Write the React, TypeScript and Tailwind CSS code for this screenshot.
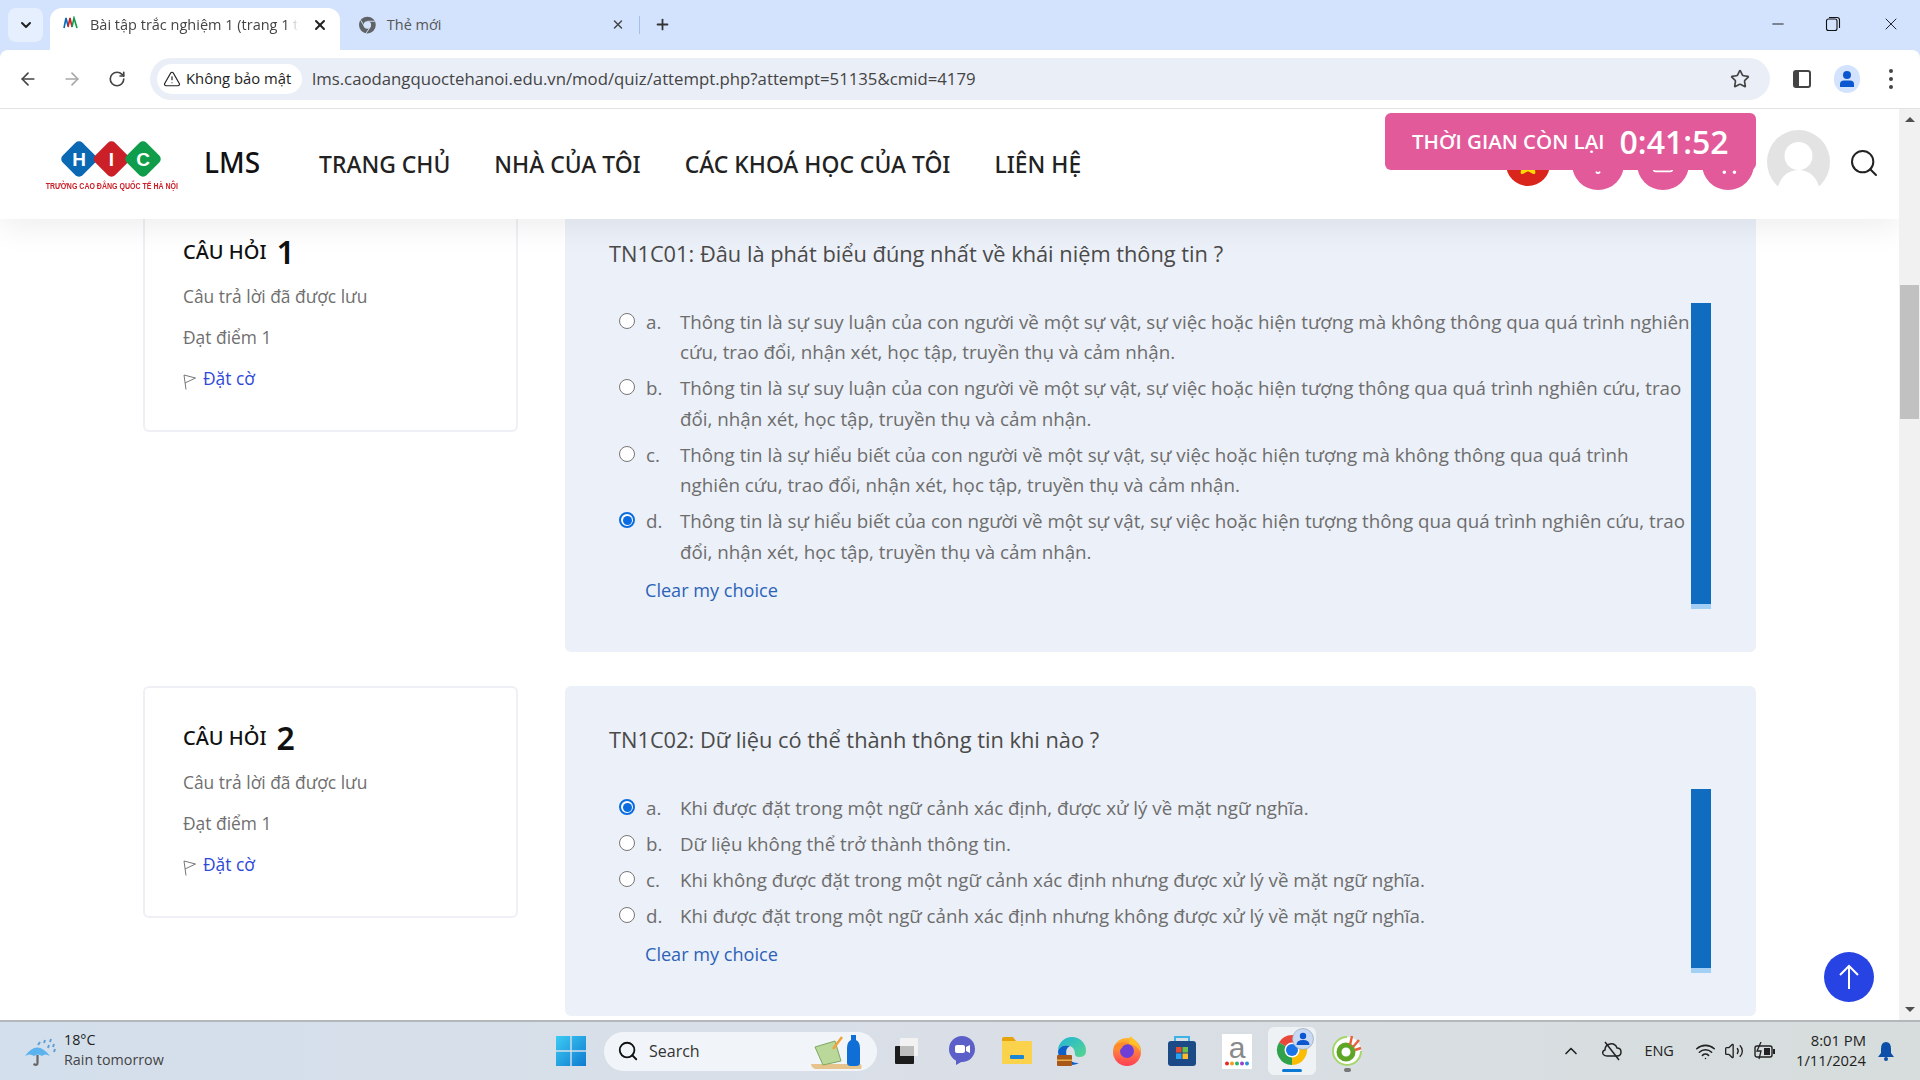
import { ArrowLeft, ArrowRight, Bell, ChevronDown, ChevronUp, Mail, Minus, Plus, RotateCw, Search, ShoppingCart, Star, TriangleAlert, Volume2, Wifi, X } from 'lucide-react';

const questions = [
  {
    number: 1,
    title: 'TN1C01: Đâu là phát biểu đúng nhất về khái niệm thông tin ?',
    picked: 'd',
    options: [
      ['a', 'Thông tin là sự suy luận của con người về một sự vật, sự việc hoặc hiện tượng mà không thông qua quá trình nghiên cứu, trao đổi, nhận xét, học tập, truyền thụ và cảm nhận.'],
      ['b', 'Thông tin là sự suy luận của con người về một sự vật, sự việc hoặc hiện tượng thông qua quá trình nghiên cứu, trao đổi, nhận xét, học tập, truyền thụ và cảm nhận.'],
      ['c', 'Thông tin là sự hiểu biết của con người về một sự vật, sự việc hoặc hiện tượng mà không thông qua quá trình nghiên cứu, trao đổi, nhận xét, học tập, truyền thụ và cảm nhận.'],
      ['d', 'Thông tin là sự hiểu biết của con người về một sự vật, sự việc hoặc hiện tượng thông qua quá trình nghiên cứu, trao đổi, nhận xét, học tập, truyền thụ và cảm nhận.'],
    ],
  },
  {
    number: 2,
    title: 'TN1C02: Dữ liệu có thể thành thông tin khi nào ?',
    picked: 'a',
    options: [
      ['a', 'Khi được đặt trong một ngữ cảnh xác định, được xử lý về mặt ngữ nghĩa.'],
      ['b', 'Dữ liệu không thể trở thành thông tin.'],
      ['c', 'Khi không được đặt trong một ngữ cảnh xác định nhưng được xử lý về mặt ngữ nghĩa.'],
      ['d', 'Khi được đặt trong một ngữ cảnh xác định nhưng không được xử lý về mặt ngữ nghĩa.'],
    ],
  },
];

function HicLogo() {
  return (
    <div className="mt-[3px] flex w-[132px] flex-col items-center">
      <svg width="102" height="38" viewBox="0 0 102 38">
        <rect x="4" y="5" width="28" height="28" rx="5" transform="rotate(45 18 19)" fill="#0b68b3" />
        <rect x="36.5" y="5" width="28" height="28" rx="5" transform="rotate(45 50.5 19)" fill="#cb2027" />
        <rect x="68" y="5" width="28" height="28" rx="5" transform="rotate(45 82 19)" fill="#0f9d4b" />
        <text x="18" y="26" textAnchor="middle" fontSize="19" fontWeight="700" fill="#fff" fontFamily="Liberation Sans">H</text>
        <text x="50.5" y="26" textAnchor="middle" fontSize="19" fontWeight="700" fill="#fff" fontFamily="Liberation Sans">I</text>
        <text x="82" y="26" textAnchor="middle" fontSize="19" fontWeight="700" fill="#fff" fontFamily="Liberation Sans">C</text>
      </svg>
      <div className="mt-[3px] scale-x-[0.78] whitespace-nowrap font-['Liberation_Sans'] text-[9px] leading-[11px] font-bold text-[#cb2027]">TRƯỜNG CAO ĐẲNG QUỐC TẾ HÀ NỘI</div>
    </div>
  );
}

function Avatar() {
  return (
    <svg width="63" height="64" viewBox="0 0 63 64">
      <ellipse cx="31.5" cy="32" rx="31.5" ry="32" fill="#e3e3e3" />
      <circle cx="31.5" cy="26" r="14" fill="#fff" />
      <path d="M10 62 C12 46 22 40 31.5 40 C41 40 51 46 53 62 C46 66 17 66 10 62 Z" fill="#fff" />
    </svg>
  );
}

function QuestionCard({ q }: { q: (typeof questions)[number] }) {
  return (
    <div className="flex gap-[47px]">
      <div className="h-[232px] w-[375px] shrink-0 rounded-md border-2 border-[#eef0f6] bg-white pt-[30px] pl-[38px]">
        <div className="flex h-[40px] items-center gap-[10px] font-['Noto_Sans'] font-semibold text-[#111]">
          <span className="text-[20px] font-medium">CÂU HỎI</span>
          <span className="text-[32px]">{q.number}</span>
        </div>
        <div className="mt-[4px] font-['Open_Sans'] text-[17.4px] leading-[41px] text-[#6f6f6f]">
          <div>Câu trả lời đã được lưu</div>
          <div>Đạt điểm 1</div>
          <div className="flex items-center gap-[7px]">
            <svg width="13" height="16" viewBox="0 0 13 16" className="mt-[6px]">
              <path d="M3 15.5 L1 1 L12.5 4 L2 9" fill="none" stroke="#777" strokeWidth="1" />
            </svg>
            <span className="text-[#2f49d8]">Đặt cờ</span>
          </div>
        </div>
      </div>
      <div className="w-[1191px] shrink-0 rounded-md bg-[#ecf0f8] pt-[36px] pr-[45px] pb-[43px] pl-[44px] font-['Open_Sans']">
        <h2 className="text-[21.8px] leading-[36px] font-normal text-[#4a4a4a]">{q.title}</h2>
        <div className="mt-[31px] ml-[1px] flex">
          <div className="w-[1081px] pt-[4px]">
            <div className="flex flex-col gap-[5.6px]">
              {q.options.map(([key, text]) => (
                <div key={key} className="flex text-[18.75px] leading-[30.4px] text-[#6d6d6d]">
                  <div className="ml-[9px] flex h-[30.4px] w-[27px] shrink-0 items-start pt-[6px]">
                    {q.picked === key ? (
                      <span className="flex h-[16px] w-[16px] items-center justify-center rounded-full border-2 border-[#0a6ce0] bg-white">
                        <span className="h-[9px] w-[9px] rounded-full bg-[#0a6ce0]" />
                      </span>
                    ) : (
                      <span className="h-[16px] w-[16px] rounded-full border border-[#767676] bg-white" />
                    )}
                  </div>
                  <span className="w-[34px] shrink-0">{key}.</span>
                  <span>{text}</span>
                </div>
              ))}
            </div>
            <div className="mt-[8px] mb-[4px] pl-[35px] text-[18.1px] leading-[30px] text-[#2b62b8]">Clear my choice</div>
          </div>
          <div className="w-[20px] shrink-0 border-b-[5px] border-b-[#a3cff5] bg-[#0f6cbf]" />
        </div>
      </div>
    </div>
  );
}

function BrowserChrome() {
  return (
    <>
      <div className="flex h-[50px] shrink-0 items-end bg-[#d3e3fd] font-['Open_Sans'] text-[14.5px] text-[#444]">
        <div className="mb-[8px] ml-[8px] flex h-[34px] w-[35px] items-center justify-center rounded-lg bg-[#e6effd]">
          <ChevronDown size={16} strokeWidth={3} color="#222" />
        </div>
        <div className="ml-[7px] flex h-[42px] w-[290px] items-center rounded-t-xl bg-white pb-[9px] pl-[13px]">
          <svg width="15" height="14" viewBox="0 0 15 14" className="mb-[4px]">
            <path d="M1 12 L3 2 L5 10" fill="none" stroke="#0b68b3" strokeWidth="1.6" />
            <path d="M5 11 L7 2 L9 11" fill="none" stroke="#cb2027" strokeWidth="1.6" />
            <path d="M9 11 L11 2 L14 12" fill="none" stroke="#0f9d4b" strokeWidth="1.6" />
          </svg>
          <span className="ml-[12px] w-[208px] overflow-hidden whitespace-nowrap [mask-image:linear-gradient(to_right,black_94%,transparent)]">Bài tập trắc nghiệm 1 (trang 1 t</span>
          <X size={16} strokeWidth={3} color="#222" className="ml-[14px]" />
        </div>
        <div className="flex h-[42px] w-[300px] items-center pb-[9px] pl-[19px]">
          <svg width="18" height="18" viewBox="0 0 18 18">
            <circle cx="9" cy="9" r="9" fill="#5f6368" />
            <circle cx="9" cy="9" r="4" fill="#d3e3fd" />
            <path d="M9 5 H17 M6 11 L2 4 M11.5 12 L7.5 18" stroke="#d3e3fd" strokeWidth="1" />
          </svg>
          <span className="ml-[11px] w-[226px] text-[#555]">Thẻ mới</span>
          <X size={15} strokeWidth={2.5} color="#444" className="ml-[14px]" />
          <div className="ml-[14px] h-[18px] w-[1px] bg-[#a5c0ea]" />
        </div>
        <div className="mb-[17px] ml-[14px]">
          <Plus size={17} strokeWidth={2.5} color="#333" />
        </div>
        <div className="mb-[16px] ml-auto flex items-center">
          <Minus size={18} strokeWidth={1.2} color="#111" />
          <svg width="16" height="16" viewBox="0 0 16 16" className="ml-[38px]">
            <rect x="1.5" y="3" width="10.5" height="11.5" rx="2" fill="none" stroke="#111" strokeWidth="1.1" />
            <path d="M4 1.5 H12 Q14.5 1.5 14.5 4 V12" fill="none" stroke="#111" strokeWidth="1.1" />
          </svg>
          <X size={20} strokeWidth={1.1} color="#111" className="mr-[19px] ml-[40px]" />
        </div>
      </div>
      <div className="flex h-[59px] shrink-0 items-center rounded-t-lg border-b border-b-[#e3e3e3] bg-white pb-[1px]">
        <ArrowLeft size={20} color="#444" strokeWidth={2} className="ml-[18px]" />
        <ArrowRight size={20} color="#a8a8a8" strokeWidth={2} className="ml-[24px]" />
        <RotateCw size={18} color="#444" strokeWidth={2.2} className="ml-[26px]" />
        <div className="ml-[24px] flex h-[42px] w-[1620px] items-center rounded-full bg-[#eaeef7] pr-[20px] pl-[7px]">
          <div className="flex h-[30px] w-[145px] items-center gap-[5px] rounded-full bg-white pl-[6px] font-['Open_Sans'] text-[14.8px] font-medium text-[#222]">
            <TriangleAlert size={18} strokeWidth={1.6} color="#222" />
            Không bảo mật
          </div>
          <span className="mt-[1px] ml-[10px] font-['Open_Sans'] text-[16.75px] text-[#444]">lms.caodangquoctehanoi.edu.vn/mod/quiz/attempt.php?attempt=51135&amp;cmid=4179</span>
          <Star size={20} color="#444" strokeWidth={2} className="ml-auto" />
        </div>
        <svg width="18" height="18" viewBox="0 0 18 18" className="ml-[23px]">
          <rect x="1" y="1" width="16" height="16" rx="2" fill="none" stroke="#444" strokeWidth="2" />
          <rect x="1" y="1" width="5" height="16" fill="#444" />
        </svg>
        <div className="ml-[23px] flex h-[28px] w-[26px] items-center justify-center rounded-full bg-[#d3e3fd]">
          <svg width="16" height="17" viewBox="0 0 16 17">
            <circle cx="8" cy="5" r="4" fill="#0b57d0" />
            <path d="M1 17 V14 Q1 10.5 5 10.5 H11 Q15 10.5 15 14 V17 Z" fill="#0b57d0" />
          </svg>
        </div>
        <div className="ml-[29px] flex flex-col gap-[4px]">
          <span className="h-[4px] w-[4px] rounded-full bg-[#444]" />
          <span className="h-[4px] w-[4px] rounded-full bg-[#444]" />
          <span className="h-[4px] w-[4px] rounded-full bg-[#444]" />
        </div>
      </div>
    </>
  );
}

function PageHeader() {
  return (
    <header className="relative z-10 flex h-[110px] items-center bg-white pl-[46px] shadow-[0_8px_30px_rgba(0,0,0,0.07)]">
      <HicLogo />
      <span className="mb-[4px] ml-[26px] font-['Noto_Sans'] text-[28px] font-medium text-[#111]">LMS</span>
      <nav className="mt-[2px] ml-[59px] flex gap-[44px] font-['Noto_Sans'] text-[22.9px] font-medium text-[#222]">
        <span>TRANG CHỦ</span>
        <span>NHÀ CỦA TÔI</span>
        <span>CÁC KHOÁ HỌC CỦA TÔI</span>
        <span>LIÊN HỆ</span>
      </nav>
      <div className="ml-auto flex items-center pr-[19px]">
        <div className="flex items-center gap-[13px]">
          <span className="mr-[9px] flex h-[44px] w-[44px] items-center justify-center rounded-full bg-[#da251d]">
            <Star size={24} fill="#ffdd00" color="#ffdd00" />
          </span>
          <span className="flex h-[52px] w-[52px] items-center justify-center rounded-full bg-[#e25a9a]">
            <Bell size={22} color="#fff" />
          </span>
          <span className="flex h-[52px] w-[52px] items-center justify-center rounded-full bg-[#e25a9a]">
            <Mail size={22} color="#fff" />
          </span>
          <span className="flex h-[52px] w-[52px] items-center justify-center rounded-full bg-[#e25a9a]">
            <ShoppingCart size={22} color="#fff" />
          </span>
        </div>
        <div className="mb-[4px] ml-[13px]">
          <Avatar />
        </div>
        <Search size={32} strokeWidth={1.5} color="#222" className="mb-[2px] ml-[18px]" />
      </div>
      <div className="absolute top-[4px] left-[1385px] flex h-[57px] w-[371px] items-center rounded-md bg-[#e25a9a] pl-[27px] font-['Open_Sans'] font-semibold text-white">
        <span className="text-[20.5px]">THỜI GIAN CÒN LẠI</span>
        <span className="ml-[15px] text-[32px]">0:41:52</span>
      </div>
    </header>
  );
}

function Scrollbar() {
  return (
    <div className="flex w-[21px] shrink-0 flex-col items-center bg-[#f1f1f1]">
      <div className="mt-[8px] h-0 w-0 border-x-[5px] border-b-[5px] border-x-transparent border-b-[#505050]" />
      <div className="mt-[163px] h-[134px] w-[19px] bg-[#c1c1c1]" />
      <div className="mt-auto mb-[8px] h-0 w-0 border-x-[5px] border-t-[5px] border-x-transparent border-t-[#505050]" />
    </div>
  );
}

function TaskbarApps() {
  return (
    <div className="flex items-center">
      <svg width="30" height="30" viewBox="0 0 30 30" className="mr-[18px]">
        <defs>
          <linearGradient id="win" x1="0" y1="0" x2="1" y2="1">
            <stop offset="0" stopColor="#3ccbf4" />
            <stop offset="1" stopColor="#0f7bd0" />
          </linearGradient>
          <linearGradient id="edge" x1="0" y1="0" x2="1" y2="1">
            <stop offset="0" stopColor="#1fb5d8" />
            <stop offset="1" stopColor="#58d68d" />
          </linearGradient>
          <linearGradient id="fox" x1="0" y1="0" x2="0" y2="1">
            <stop offset="0" stopColor="#ffb52e" />
            <stop offset="1" stopColor="#ff3d56" />
          </linearGradient>
        </defs>
        <path d="M0 0 H14.3 V14.3 H0 Z M15.7 0 H30 V14.3 H15.7 Z M0 15.7 H14.3 V30 H0 Z M15.7 15.7 H30 V30 H15.7 Z" fill="url(#win)" />
      </svg>
      <div className="flex h-[39px] w-[273px] items-center rounded-full bg-[#f1f5f9] pl-[13px] font-['Open_Sans'] text-[16px] text-[#333]">
        <Search size={22} strokeWidth={2} color="#111" />
        <span className="ml-[10px]">Search</span>
        <svg width="62" height="36" viewBox="0 0 62 36" className="mr-[6px] ml-auto">
          <path d="M2 31 H50 Q54 31 52 36 H6 Q2 34 2 31 Z" fill="#e6c48c" />
          <path d="M6 14 L26 8 L32 28 L14 32 Z" fill="#b9d89a" stroke="#7fa860" />
          <path d="M24 16 L33 4" stroke="#f2a33a" strokeWidth="2.5" />
          <path d="M38 15 Q38 9 42 7 V2 H47 V7 Q51 9 51 15 V30 Q51 33 47 33 H42 Q38 33 38 30 Z" fill="#0f6fd6" />
        </svg>
      </div>
      <div className="ml-[15px] flex items-center gap-[25px]">
        <svg width="30" height="30" viewBox="0 0 30 30">
          <rect x="8" y="2" width="18" height="18" rx="1" fill="#f2f2f2" />
          <rect x="3" y="10" width="19" height="18" rx="1" fill="#1c1c1c" />
          <rect x="8" y="10" width="14" height="10" fill="#bdbdbd" />
        </svg>
        <svg width="30" height="30" viewBox="0 0 30 30">
          <circle cx="15" cy="13" r="13" fill="#5b5fc7" />
          <path d="M9 22 L9 29 L16 25 Z" fill="#5b5fc7" />
          <rect x="8" y="9" width="10" height="8" rx="2" fill="#fff" />
          <path d="M19 11 L23 9 V17 L19 15 Z" fill="#fff" />
        </svg>
        <svg width="30" height="30" viewBox="0 0 30 30">
          <path d="M0 3 Q0 1 2 1 H11 L14 5 H0 Z" fill="#e5a50a" />
          <rect x="0" y="5" width="30" height="23" rx="1" fill="#fbd24c" />
          <rect x="8" y="19" width="14" height="4" rx="1" fill="#1b86d6" />
        </svg>
        <svg width="30" height="30" viewBox="0 0 30 30">
          <path d="M1 15 A14 14 0 0 1 29 15 Q29 21 22 21 Q18 21 18 18 Q18 12 13 10 Q4 8 1 15 Z" fill="url(#edge)" />
          <path d="M1 15 Q4 8 13 10 Q7 13 10 21 Q13 27 22 27 Q18 29 15 29 A14 14 0 0 1 1 15 Z" fill="#0c60c7" />
          <rect x="0" y="19" width="15" height="11" rx="1" fill="#a8591a" />
          <rect x="0" y="23.5" width="15" height="1.5" fill="#e8b04a" />
        </svg>
        <svg width="30" height="30" viewBox="0 0 30 30">
          <circle cx="15" cy="16" r="14" fill="url(#fox)" />
          <path d="M18 0 Q28 7 29 17 Q25 8 17 8 Z" fill="#ffc226" />
          <circle cx="15" cy="15" r="7" fill="#6d3fd6" />
          <path d="M2 10 Q8 4 18 8 Q11 8 10 12 L5 16 Z" fill="#ff8a2b" />
        </svg>
        <svg width="30" height="32" viewBox="0 0 30 32">
          <path d="M8 8 V2 H22 V8" fill="none" stroke="#3cb2e6" strokeWidth="2" />
          <rect x="1" y="6" width="28" height="25" rx="3" fill="#1b4a86" />
          <rect x="9" y="12" width="5.5" height="5.5" fill="#e94a2f" />
          <rect x="15.5" y="12" width="5.5" height="5.5" fill="#6cc04a" />
          <rect x="9" y="18.5" width="5.5" height="5.5" fill="#2aa3ef" />
          <rect x="15.5" y="18.5" width="5.5" height="5.5" fill="#fbb92d" />
        </svg>
        <div className="flex h-[35px] w-[30px] flex-col items-center bg-white">
          <span className="font-['Liberation_Sans'] text-[30px] leading-[27px] text-[#8a8a8a]">a</span>
          <svg width="26" height="5" viewBox="0 0 26 5">
            <circle cx="3" cy="2.5" r="2" fill="#e5262a" />
            <circle cx="8" cy="2.5" r="2" fill="#f0a020" />
            <circle cx="13" cy="2.5" r="2" fill="#2bb36c" />
            <circle cx="18" cy="2.5" r="2" fill="#9a3fd6" />
            <circle cx="23" cy="2.5" r="2" fill="#2a8fd6" />
          </svg>
        </div>
        <div className="-mx-[9px] flex h-[48px] w-[48px] flex-col items-center justify-center rounded-md bg-[#eef2f4]">
          <svg width="42" height="38" viewBox="0 0 42 38" className="-mt-[2px] ml-[8px]">
            <path d="M17 22 L4 14.5 A15 15 0 0 1 30 14.5 Z" fill="#e9473a" />
            <path d="M17 37 A15 15 0 0 1 4 14.5 L17 22 Z" fill="#31a24c" />
            <path d="M30 14.5 A15 15 0 0 1 17 37 L17 22 Z" fill="#fbbc04" />
            <circle cx="17" cy="22" r="7.5" fill="#fff" />
            <circle cx="17" cy="22" r="6" fill="#1a73e8" />
            <circle cx="28" cy="11" r="10.5" fill="#c9d9f2" stroke="#9aa6b5" strokeWidth="0.7" />
            <circle cx="28" cy="8" r="3.2" fill="#0b57d0" />
            <path d="M21.5 17 Q21.5 12 28 12 Q34.5 12 34.5 17 Z" fill="#0b57d0" />
          </svg>
          <span className="mt-[3px] h-[3px] w-[20px] rounded-full bg-[#0a78d4]" />
        </div>
        <div className="flex flex-col items-center pt-[4px]">
          <svg width="30" height="32" viewBox="0 0 30 32">
            <circle cx="15" cy="17" r="14" fill="#fff" />
            <path d="M15 3 A14 14 0 1 0 29 17" fill="none" stroke="#a6d66b" strokeWidth="2" />
            <circle cx="14" cy="18" r="7" fill="none" stroke="#5fa626" strokeWidth="5" />
            <path d="M18 11 L20 2 M21 13 L27 6 M23 16 L29 14" stroke="#e9603a" strokeWidth="2.4" />
          </svg>
          <span className="mt-[2px] h-[4px] w-[7px] rounded-full bg-[#777]" />
        </div>
      </div>
    </div>
  );
}

function Taskbar() {
  return (
    <footer className="flex h-[60px] shrink-0 items-center border-t-2 border-t-[#b4b8bb] bg-gradient-to-r from-[#d3dfec] via-[#dadfe7] to-[#d6dddc] font-['Open_Sans'] text-[#222]">
      <div className="flex w-[556px] shrink-0 items-center pl-[25px]">
        <svg width="32" height="32" viewBox="0 0 32 32">
          <path d="M0 21 Q12 4 25 21 Q20 18 17 21 Q13 18 9 21 Q5 18 0 21 Z" fill="#5ab2ee" />
          <path d="M12.5 20 V28 Q12.5 31 8.5 29" fill="none" stroke="#666" strokeWidth="2.2" />
          <path d="M15 7 L13 10 M20 5 L19 8 M26 4 L25 7 M24 10 L23 13 M29 9 L28 12 M30 14 L29 17" stroke="#5f9ed6" strokeWidth="2" />
        </svg>
        <div className="mb-[3px] ml-[7px] text-[14.3px] leading-[20px]">
          <div>18°C</div>
          <div className="text-[#444]">Rain tomorrow</div>
        </div>
      </div>
      <TaskbarApps />
      <div className="ml-auto flex items-center pr-[25px] text-[14px]">
        <ChevronUp size={20} strokeWidth={2} color="#222" />
        <svg width="22" height="20" viewBox="0 0 22 20" className="ml-[20px]">
          <path d="M6 15 H16 Q20 15 20 11 Q20 7 16 7 Q14 2 9 3 Q4 4 4 9 Q1 10 2 13 Q3 15 6 15 Z" fill="none" stroke="#222" strokeWidth="1.5" />
          <path d="M4 1 L18 19" stroke="#222" strokeWidth="1.5" />
        </svg>
        <span className="ml-[21px] text-[14.5px]">ENG</span>
        <Wifi size={21} strokeWidth={1.8} color="#222" className="ml-[21px]" />
        <Volume2 size={20} strokeWidth={1.6} color="#222" className="ml-[8px]" />
        <svg width="22" height="18" viewBox="0 0 22 18" className="ml-[10px]">
          <rect x="1" y="4" width="17" height="11" rx="2" fill="none" stroke="#222" strokeWidth="1.4" />
          <rect x="10" y="6" width="6" height="7" fill="#222" />
          <rect x="19" y="7" width="2" height="5" fill="#222" />
          <path d="M7 0 L3 9 H7 L5 17" fill="none" stroke="#222" strokeWidth="1.3" />
        </svg>
        <div className="mb-[3px] ml-[20px] text-right text-[14.8px] leading-[20px]">
          <div>8:01 PM</div>
          <div>1/11/2024</div>
        </div>
        <svg width="18" height="20" viewBox="0 0 18 20" className="ml-[11px]">
          <path d="M9 1 Q14 1 14 8 V12 L17 16 H1 L4 12 V8 Q4 1 9 1 Z" fill="#0b4fa8" />
          <circle cx="9" cy="18" r="2" fill="#0b4fa8" />
        </svg>
      </div>
    </footer>
  );
}

export default function App() {
  return (
    <div className="flex h-[1080px] w-[1920px] flex-col overflow-hidden bg-[#d3e3fd]">
      <BrowserChrome />
      <div className="flex min-h-0 flex-1 bg-white">
        <main className="relative w-[1899px] overflow-hidden">
          <PageHeader />
          <div className="-mt-[19px] flex flex-col gap-[34px] pl-[143px]">
            {questions.map((q) => (
              <QuestionCard key={q.number} q={q} />
            ))}
          </div>
          <button className="absolute right-[25px] bottom-[18px] z-20 flex h-[50px] w-[50px] items-center justify-center rounded-full bg-[#2743e4]">
            <svg width="22" height="26" viewBox="0 0 22 26">
              <path d="M11 25 V2 M2 11 L11 2 L20 11" fill="none" stroke="#fff" strokeWidth="2" />
            </svg>
          </button>
        </main>
        <Scrollbar />
      </div>
      <Taskbar />
    </div>
  );
}
